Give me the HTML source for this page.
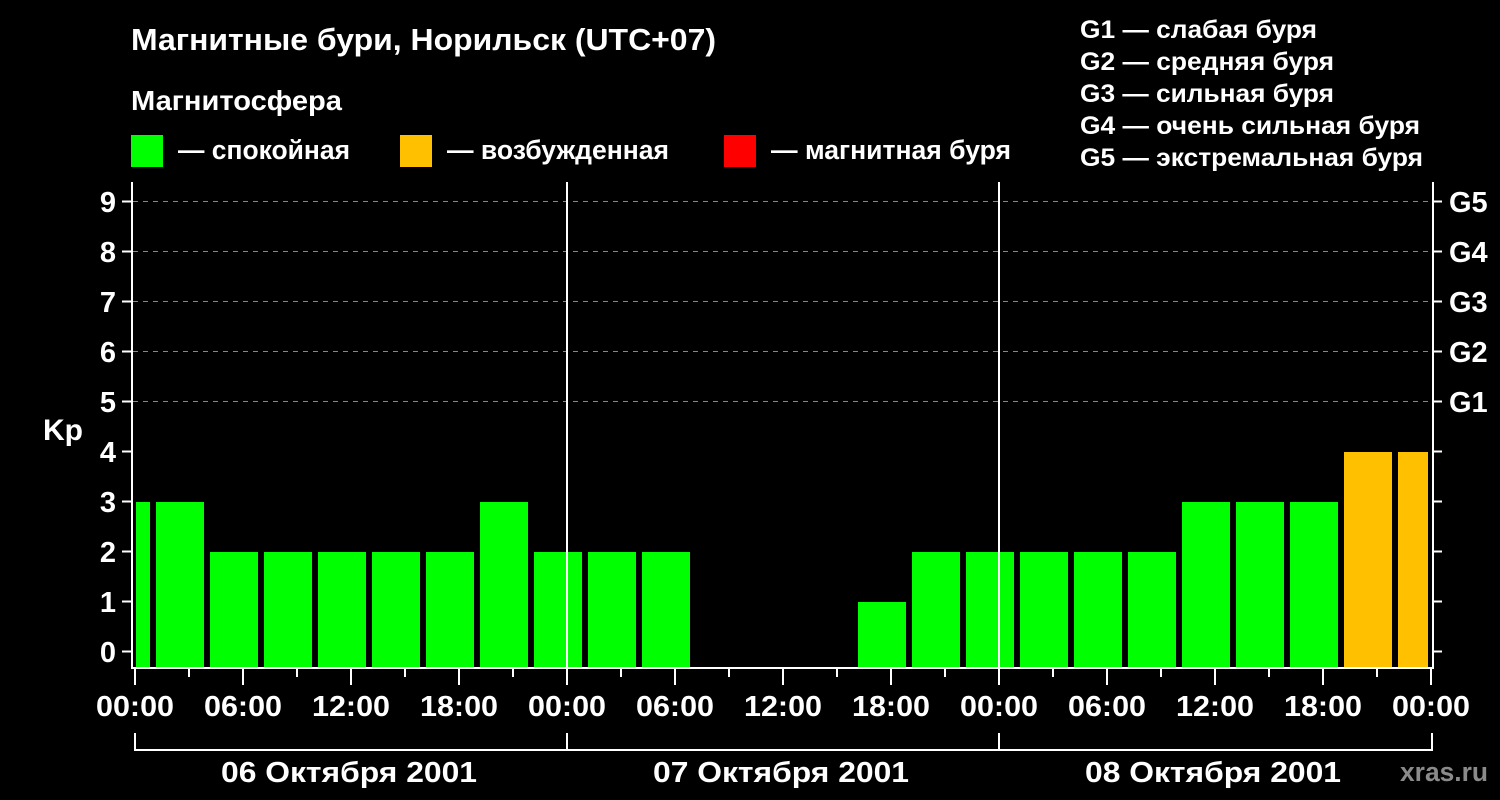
<!DOCTYPE html>
<html><head><meta charset="utf-8"><style>
html,body{margin:0;padding:0;background:#000;}
svg{display:block;}
text{font-family:"Liberation Sans",Arial,sans-serif;font-weight:bold;fill:#fff;}
</style></head><body>
<svg width="1500" height="800" viewBox="0 0 1500 800" xmlns="http://www.w3.org/2000/svg">
<rect width="1500" height="800" fill="#000"/>
<text x="131" y="50" font-size="31" textLength="585" lengthAdjust="spacingAndGlyphs">Магнитные бури, Норильск (UTC+07)</text>
<text x="131" y="110" font-size="28" textLength="211" lengthAdjust="spacingAndGlyphs">Магнитосфера</text>
<rect x="131" y="135" width="32" height="32" fill="#00ff00"/>
<text x="178" y="159" font-size="27" textLength="172" lengthAdjust="spacingAndGlyphs">— спокойная</text>
<rect x="400" y="135" width="32" height="32" fill="#ffc000"/>
<text x="447" y="159" font-size="27" textLength="222" lengthAdjust="spacingAndGlyphs">— возбужденная</text>
<rect x="724" y="135" width="32" height="32" fill="#ff0000"/>
<text x="771" y="159" font-size="27" textLength="240" lengthAdjust="spacingAndGlyphs">— магнитная буря</text>
<g font-size="25">
<text x="1080" y="38" textLength="237" lengthAdjust="spacingAndGlyphs">G1 — слабая буря</text>
<text x="1080" y="70" textLength="254" lengthAdjust="spacingAndGlyphs">G2 — средняя буря</text>
<text x="1080" y="102" textLength="254" lengthAdjust="spacingAndGlyphs">G3 — сильная буря</text>
<text x="1080" y="134" textLength="340" lengthAdjust="spacingAndGlyphs">G4 — очень сильная буря</text>
<text x="1080" y="166" textLength="343" lengthAdjust="spacingAndGlyphs">G5 — экстремальная буря</text>
</g>
<g stroke="#888" stroke-width="1" stroke-dasharray="5,5">
<line x1="133" x2="1432" y1="201.5" y2="201.5"/>
<line x1="133" x2="1432" y1="251.5" y2="251.5"/>
<line x1="133" x2="1432" y1="301.5" y2="301.5"/>
<line x1="133" x2="1432" y1="351.5" y2="351.5"/>
<line x1="133" x2="1432" y1="401.5" y2="401.5"/>
</g>
<g fill="#00ff00">
<rect x="136" y="502" width="14" height="166"/>
<rect x="156" y="502" width="48" height="166"/>
<rect x="210" y="552" width="48" height="116"/>
<rect x="264" y="552" width="48" height="116"/>
<rect x="318" y="552" width="48" height="116"/>
<rect x="372" y="552" width="48" height="116"/>
<rect x="426" y="552" width="48" height="116"/>
<rect x="480" y="502" width="48" height="166"/>
<rect x="534" y="552" width="48" height="116"/>
<rect x="588" y="552" width="48" height="116"/>
<rect x="642" y="552" width="48" height="116"/>
<rect x="858" y="602" width="48" height="66"/>
<rect x="912" y="552" width="48" height="116"/>
<rect x="966" y="552" width="48" height="116"/>
<rect x="1020" y="552" width="48" height="116"/>
<rect x="1074" y="552" width="48" height="116"/>
<rect x="1128" y="552" width="48" height="116"/>
<rect x="1182" y="502" width="48" height="166"/>
<rect x="1236" y="502" width="48" height="166"/>
<rect x="1290" y="502" width="48" height="166"/>
</g>
<g fill="#ffc000">
<rect x="1344" y="452" width="48" height="216"/>
<rect x="1398" y="452" width="30" height="216"/>
</g>
<g stroke="#fff" stroke-width="2" fill="none">
<line x1="132" y1="182" x2="132" y2="669"/>
<line x1="131" y1="668" x2="1434" y2="668"/>
<line x1="1433" y1="182" x2="1433" y2="669"/>
<line x1="567" y1="182" x2="567" y2="668"/>
<line x1="999" y1="182" x2="999" y2="668"/>
</g>
<g stroke="#fff" stroke-width="2">
<line x1="122" x2="131" y1="201.5" y2="201.5"/><line x1="122" x2="131" y1="251.5" y2="251.5"/>
<line x1="122" x2="131" y1="301.5" y2="301.5"/><line x1="122" x2="131" y1="351.5" y2="351.5"/>
<line x1="122" x2="131" y1="401.5" y2="401.5"/><line x1="122" x2="131" y1="451.5" y2="451.5"/>
<line x1="122" x2="131" y1="501.5" y2="501.5"/><line x1="122" x2="131" y1="551.5" y2="551.5"/>
<line x1="122" x2="131" y1="601.5" y2="601.5"/><line x1="122" x2="131" y1="651.5" y2="651.5"/>
<line x1="1434" x2="1442" y1="201.5" y2="201.5"/><line x1="1434" x2="1442" y1="251.5" y2="251.5"/>
<line x1="1434" x2="1442" y1="301.5" y2="301.5"/><line x1="1434" x2="1442" y1="351.5" y2="351.5"/>
<line x1="1434" x2="1442" y1="401.5" y2="401.5"/><line x1="1434" x2="1442" y1="451.5" y2="451.5"/>
<line x1="1434" x2="1442" y1="501.5" y2="501.5"/><line x1="1434" x2="1442" y1="551.5" y2="551.5"/>
<line x1="1434" x2="1442" y1="601.5" y2="601.5"/><line x1="1434" x2="1442" y1="651.5" y2="651.5"/>
</g>
<g stroke="#fff" stroke-width="2">
<line x1="135" x2="135" y1="669" y2="685"/><line x1="189" x2="189" y1="669" y2="677"/>
<line x1="243" x2="243" y1="669" y2="685"/><line x1="297" x2="297" y1="669" y2="677"/>
<line x1="351" x2="351" y1="669" y2="685"/><line x1="405" x2="405" y1="669" y2="677"/>
<line x1="459" x2="459" y1="669" y2="685"/><line x1="513" x2="513" y1="669" y2="677"/>
<line x1="567" x2="567" y1="669" y2="685"/><line x1="621" x2="621" y1="669" y2="677"/>
<line x1="675" x2="675" y1="669" y2="685"/><line x1="729" x2="729" y1="669" y2="677"/>
<line x1="783" x2="783" y1="669" y2="685"/><line x1="837" x2="837" y1="669" y2="677"/>
<line x1="891" x2="891" y1="669" y2="685"/><line x1="945" x2="945" y1="669" y2="677"/>
<line x1="999" x2="999" y1="669" y2="685"/><line x1="1053" x2="1053" y1="669" y2="677"/>
<line x1="1107" x2="1107" y1="669" y2="685"/><line x1="1161" x2="1161" y1="669" y2="677"/>
<line x1="1215" x2="1215" y1="669" y2="685"/><line x1="1269" x2="1269" y1="669" y2="677"/>
<line x1="1323" x2="1323" y1="669" y2="685"/><line x1="1377" x2="1377" y1="669" y2="677"/>
<line x1="1431" x2="1431" y1="669" y2="685"/>
</g>
<g stroke="#fff" stroke-width="2" fill="none">
<polyline points="135,733 135,750 1432,750 1432,733"/>
<line x1="567" x2="567" y1="733" y2="750"/>
<line x1="999" x2="999" y1="733" y2="750"/>
</g>
<g font-size="29" text-anchor="end">
<text x="116" y="212">9</text><text x="116" y="262">8</text><text x="116" y="312">7</text>
<text x="116" y="362">6</text><text x="116" y="412">5</text><text x="116" y="462">4</text>
<text x="116" y="512">3</text><text x="116" y="562">2</text><text x="116" y="612">1</text>
<text x="116" y="662">0</text>
</g>
<text x="43" y="440" font-size="30">Kp</text>
<g font-size="29">
<text x="1449" y="212">G5</text><text x="1449" y="262">G4</text><text x="1449" y="312">G3</text>
<text x="1449" y="362">G2</text><text x="1449" y="412">G1</text>
</g>
<g font-size="29" text-anchor="middle">
<text x="135" y="716" textLength="78" lengthAdjust="spacingAndGlyphs">00:00</text><text x="243" y="716" textLength="78" lengthAdjust="spacingAndGlyphs">06:00</text><text x="351" y="716" textLength="78" lengthAdjust="spacingAndGlyphs">12:00</text>
<text x="459" y="716" textLength="78" lengthAdjust="spacingAndGlyphs">18:00</text><text x="567" y="716" textLength="78" lengthAdjust="spacingAndGlyphs">00:00</text><text x="675" y="716" textLength="78" lengthAdjust="spacingAndGlyphs">06:00</text>
<text x="783" y="716" textLength="78" lengthAdjust="spacingAndGlyphs">12:00</text><text x="891" y="716" textLength="78" lengthAdjust="spacingAndGlyphs">18:00</text><text x="999" y="716" textLength="78" lengthAdjust="spacingAndGlyphs">00:00</text>
<text x="1107" y="716" textLength="78" lengthAdjust="spacingAndGlyphs">06:00</text><text x="1215" y="716" textLength="78" lengthAdjust="spacingAndGlyphs">12:00</text><text x="1323" y="716" textLength="78" lengthAdjust="spacingAndGlyphs">18:00</text>
<text x="1431" y="716" textLength="78" lengthAdjust="spacingAndGlyphs">00:00</text>
<text x="349" y="782" textLength="256" lengthAdjust="spacingAndGlyphs">06 Октября 2001</text>
<text x="781" y="782" textLength="256" lengthAdjust="spacingAndGlyphs">07 Октября 2001</text>
<text x="1213" y="782" textLength="256" lengthAdjust="spacingAndGlyphs">08 Октября 2001</text>
</g>
<text x="1400" y="781" font-size="27" textLength="88" lengthAdjust="spacingAndGlyphs" style="fill:#8a8a8a">xras.ru</text>
</svg>
</body></html>
